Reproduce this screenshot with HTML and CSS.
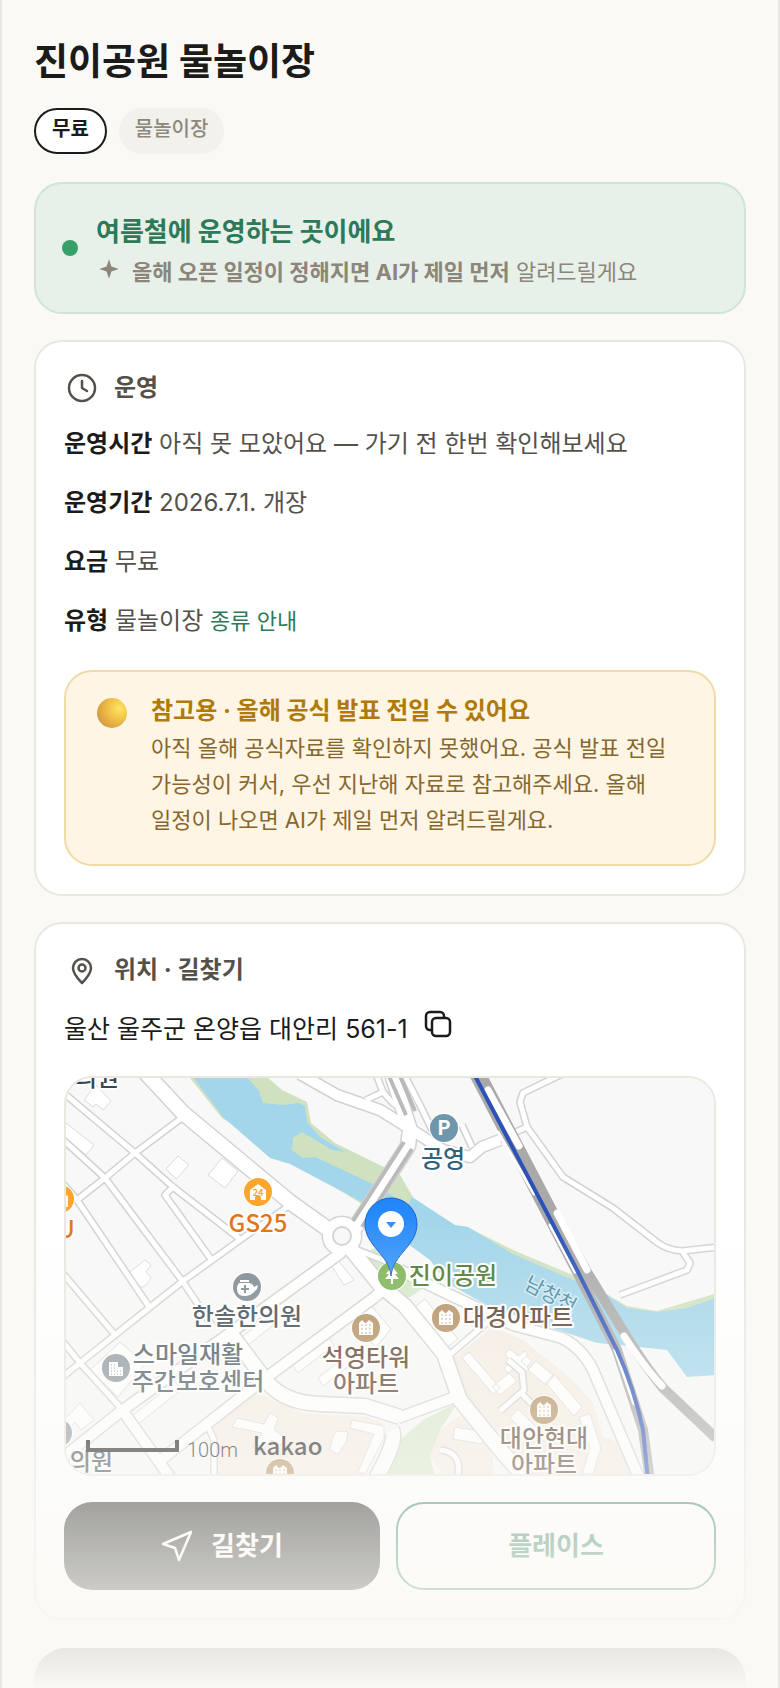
FILE: index.html
```html
<!DOCTYPE html>
<html lang="ko">
<head>
  <meta charset="UTF-8">
  <meta name="viewport" content="width=device-width, initial-scale=1.0">
  <title>진이공원 물놀이장</title>
  <link rel="stylesheet" href="styles.css">
</head>
<body>
<main class="app">
  <h1>진이공원 물놀이장</h1>
  <div class="chips">
    <span class="chip chip-free">무료</span>
    <span class="chip">물놀이장</span>
  </div>

  <section class="status">
    <span class="status-dot"></span>
    <div class="status-body">
      <h2 class="status-title">여름철에 운영하는 곳이에요</h2>
      <p class="status-sub">
        <svg class="sparkle" viewBox="0 0 24 24" aria-hidden="true"><path d="M12 3l2.200 6.800L21 12l-6.800 2.200L12 21l-2.200-6.800L3 12l6.800-2.200z"/></svg>
        <span><b>올해 오픈 일정이 정해지면 AI가 제일 먼저</b> 알려드릴게요</span>
      </p>
    </div>
  </section>

  <section class="card">
    <h2 class="card-title">
      <svg class="icon" viewBox="0 0 36 36" aria-hidden="true"><circle cx="18" cy="18" r="13"/><path d="M18 11v7l5 3"/></svg>
      운영
    </h2>
    <div class="info">
      <p><b>운영시간</b> 아직 못 모았어요 — 가기 전 한번 확인해보세요</p>
      <p><b>운영기간</b> 2026.7.1. 개장</p>
      <p><b>요금</b> 무료</p>
      <p><b>유형</b> 물놀이장 <a href="#types">종류 안내</a></p>
    </div>
    <div class="notice">
      <span class="notice-ball"></span>
      <div>
        <h3>참고용 · 올해 공식 발표 전일 수 있어요</h3>
        <p>아직 올해 공식자료를 확인하지 못했어요. 공식 발표 전일 가능성이 커서, 우선 지난해 자료로 참고해주세요. 올해 일정이 나오면 AI가 제일 먼저 알려드릴게요.</p>
      </div>
    </div>
  </section>

  <section class="card">
    <h2 class="card-title">
      <svg class="icon" viewBox="0 0 36 36" aria-hidden="true"><path d="M18 31c-4-4-9-9-9-15a9 9 0 0 1 18 0c0 6-5 11-9 15z"/><circle cx="18" cy="16" r="3.500"/></svg>
      위치 · 길찾기
    </h2>
    <div class="address">
      <span>울산 울주군 온양읍 대안리 561-1</span>
      <button class="copy" type="button" aria-label="주소 복사">
        <svg viewBox="0 0 28 28" aria-hidden="true"><rect x="8" y="8" width="18" height="18" rx="4"/><path d="M8 20H6a4 4 0 0 1-4-4V6a4 4 0 0 1 4-4h10a4 4 0 0 1 4 4v2"/></svg>
      </button>
    </div>

    <div class="map">
      <svg viewBox="66 1078 648 396" preserveAspectRatio="xMidYMid slice" role="img" aria-label="지도">
        <defs>
          <g id="lanes">
            <path d="M60 1090L135 1153L173 1187L240 1239M183 1117L135 1153L105 1178L77 1200M60 1137L105 1178L183 1282L213 1327M175 1185L165 1195L213 1262M290 1205L240 1240L183 1281L115 1335L80 1363L60 1379M60 1180L77 1200L150 1308M60 1270L115 1335M60 1338L80 1363L120 1407"/>
            <path d="M562 1074L523 1093L520 1102L527 1127L563 1177L613 1208L658 1243Q668 1250 682 1251L718 1247M682 1251L690 1263L687 1270L620 1295M527 1127L475 1150"/>
            <path d="M376 1074L383 1092L366 1100M383 1092Q398 1110 398 1104M405 1076L420 1105L432 1130M462 1125L472 1147M447 1357L490 1320M500 1411L524 1390L522 1372L508 1360M520 1392L536 1408M206 1422L214 1440L214 1476M440 1450Q462 1452 458 1476M345 1245L388 1262"/>
          </g>
          <g id="roads">
            <path d="M300 1074L337 1095L380 1110L412 1130L443 1150L470 1157L482 1147L500 1140"/>
            <path d="M60 1460L120 1412L230 1333L342 1252M157 1463L263 1380L375 1297M120 1407L172 1480M375 1297L387 1286"/>
            <path d="M400 1270L423 1282L513 1325L562 1338Q582 1348 593 1370L640 1480M398 1418L455 1397"/>
          </g>
          <g id="avenues">
            <path d="M143 1070L183 1113L290 1202L332 1232L350 1248L380 1285L405 1306L444 1354L460 1400L503 1453L527 1480"/>
            <path d="M230 1333L267 1382Q285 1403 320 1404L365 1406L400 1417M392 1430Q398 1440 375 1480M355 1228L408 1146L410 1130L392 1074"/>
          </g>
          <g id="apartment">
            <circle r="14"/>
            <path fill="#fff" stroke="none" d="M-7-5l3-3 3 3 1 0 3-3 4 3v12H-7z"/>
            <path stroke="#c2a27c" stroke-width="1" stroke-dasharray="2 2" d="M-5-3H6M-5 1H6M-5 5H6"/>
          </g>
          <linearGradient id="pin" x1="0" y1="0" x2="0" y2="1">
            <stop offset="0" stop-color="#1f86fb"/><stop offset="1" stop-color="#3d97fa"/>
          </linearGradient>
        </defs>

        <rect class="land" x="66" y="1078" width="648" height="396"/>
        <path class="estate" d="M450 1360L493 1327L523 1340L573 1380L593 1403L603 1437L620 1443L632 1480H530L497 1440L460 1390z"/>
        <path class="estate" d="M213 1420L257 1393L303 1413L367 1417L383 1423V1437L363 1480H213z"/>
        <path class="estate" d="M467 1410L493 1443V1480H447L430 1457L440 1430z"/>
        <path class="green pale" d="M458 1402L440 1430L430 1457L436 1480H385L400 1440L423 1420z"/>
        <path class="green pale" d="M360 1255L375 1248L425 1287L410 1297L390 1300z"/>
        <path class="green" d="M190 1078L222 1118L362 1204L385 1209L408 1208L413 1197L400 1175L335 1143L311 1123L307 1102L282 1090L266 1076z"/>
        <path class="green" d="M465 1226L513 1250L575 1276L627 1306L657 1311L714 1294V1302L657 1316L560 1290z"/>
        <path class="water" d="M192 1076L224 1118L270 1158L290 1164L362 1202L373 1184L315 1157L303 1158L292 1150L293 1138L302 1132L332 1150L345 1152L320 1137L307 1122L305 1106L298 1103L283 1105L263 1103L259 1091L246 1076z"/>
        <path class="water" d="M362 1202L373 1184L408 1205L412 1197L455 1225L468 1227L513 1254L573 1280L595 1287L627 1308L657 1312L687 1308L716 1298V1375L687 1377L667 1350L620 1345L597 1343L567 1333L490 1307L447 1283L430 1260L408 1244z"/>

        <g class="buildings">
          <path d="M84 1100l12-15 15 16-8 9-7-6-3 3zM66 1123l28 22-8 10-24-20zM166 1169l12-13 11 9-13 14zM208 1175l14-17 16 13-13 17zM130 1272l15-12 6 5-5 7 5 6-6 8-6 2zM329 1262l7-4 18 22-10 5z"/>
          <path d="M90 1370l30-28 25 22-27 33zM64 1420l16-17 14 17-13 10-6-8-8 8zM127 1420l48-38 6 8-48 38zM238 1340l32-25 6 8-32 25zM292 1365l36-28 6 8-36 28zM318 1378l36-28 5 8-36 28zM347 1318l22-15 22 26-15 18z"/>
          <path d="M415 1307l10-8 33 40-11 8zM462 1358l7-6 31 36-7 6zM492 1387l17-14 8 8-17 14zM515 1361l8-8 9 8-8 9zM528 1370l8-9 18 15-8 9zM546 1383l8-9 28 33-8 9zM510 1418l8-9 28 28-7 8zM579 1417l11-3 11 34-8 26h-11l8-26zM455 1427l29 5-2 12-29-5z"/>
          <path d="M232 1427l5-9 27 6 6-11 8 5-4 12 12 8-5 7-10-5-11 12-7-5 9-14zM332 1440l4-9 12 1-2 10-8 12-8-4zM352 1420l32 6v12l-19 36-7-2 16-38-24-6z"/>
          <path d="M505 1354l5-5 8 7 7-5 3 4-7 6 8 8-5 4-8-7-8 7-4-5 7-6z"/>
        </g>

        <use href="#lanes" class="lane-edge"/>
        <use href="#roads" class="road-edge"/>
        <use href="#avenues" class="avenue-edge"/>
        <circle class="ring-edge" cx="342" cy="1236" r="14"/>
        <use href="#lanes" class="lane"/>
        <use href="#roads" class="road"/>
        <use href="#avenues" class="avenue"/>
        <circle class="ring" cx="342" cy="1236" r="14"/>
        <circle class="island" cx="342" cy="1236" r="9"/>
        <path class="bridge" d="M353 1221L404 1142M362 1227L412 1149M389 1076L406 1115M400 1076L415 1111"/>

        <path class="rail" d="M474 1074L577 1272L617 1350L643 1430L650 1480"/>
        <path class="rail" d="M481 1074L518 1145L553 1212L587 1272L627 1337Q645 1366 663 1388L716 1438"/>
        <path class="rail-gap" d="M488 1090L519 1146M557 1213L587 1270M624 1336Q645 1368 662 1386"/>
        <path class="rail-gap thin" d="M498 1132L534 1194M550 1225L575 1272M615 1350L634 1404"/>
        <path class="rail-line" d="M474 1074L577 1270L617 1350Q634 1388 643 1430L648 1480"/>

        <g class="poi">
          <circle cx="444" cy="1128" r="14" fill="#6f97ab"/>
          <circle cx="258" cy="1192" r="14" fill="#fca62f"/>
          <path fill="#fff" stroke="none" d="M250 1190l8-6 8 6v10h-5v-2a3 3 0 0 0-6 0v2h-5z"/>
          <circle cx="60" cy="1199" r="14" fill="#fca62f"/>
          <path fill="#fff" stroke="none" d="M60 1193l8 3v11h-8z"/>
          <circle cx="247" cy="1287" r="14" fill="#7d8a92"/>
          <path fill="#fff" stroke="none" d="M240 1280h9v2h-9zM239 1283h11q3 1 4 4l4-2-1 4-4 4q-3 3-7 3h-3q-6-1-6-7 0-4 2-6z"/>
          <path stroke="#7d8a92" stroke-width="2" d="M245 1285v8M241 1289h8"/>
          <circle cx="116" cy="1368" r="14" fill="#8c989e"/>
          <path fill="#fff" stroke="none" d="M109 1362h9v5h5v9h-14z"/>
          <path stroke="#8c989e" stroke-width="1" stroke-dasharray="1 2" d="M111 1365h6M111 1368h6M111 1371h11M111 1374h11"/>
          <circle cx="58" cy="1433" r="14" fill="#8c989e"/>
          <circle cx="392" cy="1276" r="14" fill="#7fb457"/>
          <path fill="#fff" stroke="none" d="M392 1266l6 8h-3l4 5h-6v5h-2v-5h-6l4-5h-3z"/>
          <g fill="#b38e60">
            <use href="#apartment" x="366" y="1328"/>
            <use href="#apartment" x="446" y="1318"/>
            <use href="#apartment" x="544" y="1410"/>
            <use href="#apartment" x="280" y="1473"/>
          </g>
        </g>

        <text class="river" transform="translate(523 1288) rotate(28)">남창천</text>
        <g class="labels">
          <text class="parking-mark" x="444" y="1135">P</text>
          <text class="store-mark" x="258" y="1196">24</text>
          <text class="parking" x="443" y="1167">공영</text>
          <text class="store" x="258" y="1232">GS25</text>
          <text class="store" x="66" y="1238">U</text>
          <text class="clinic" x="97" y="1086">의원</text>
          <text class="clinic" x="247" y="1325">한솔한의원</text>
          <text class="care" x="188" y="1363">스마일재활</text>
          <text class="care" x="198" y="1390">주간보호센터</text>
          <text class="clinic" x="91" y="1470">의원</text>
          <text class="park" x="453" y="1284">진이공원</text>
          <text class="home" x="518" y="1326">대경아파트</text>
          <text class="home" x="366" y="1366">석영타워</text>
          <text class="home" x="366" y="1392">아파트</text>
          <text class="home" x="544" y="1447">대안현대</text>
          <text class="home" x="544" y="1473">아파트</text>
        </g>

        <path class="scale" d="M88 1440v10h89v-10"/>
        <text class="scale-text" x="187" y="1457">100m</text>
        <text class="brand" x="253" y="1455">kakao</text>

        <path class="pin" d="M391 1276C389 1254 365 1246 365 1224a26 26 0 0 1 52 0C417 1246 393 1254 391 1276z"/>
        <circle cx="391" cy="1224" r="13" fill="#fff"/>
        <path fill="#2f8ffb" d="M386 1222h10l-5 6z"/>
      </svg>
    </div>

    <div class="actions">
      <button class="btn btn-primary" type="button">
        <svg viewBox="0 0 32 32" aria-hidden="true"><path d="M30 2L2 14l12 4 4 12z"/></svg>
        길찾기
      </button>
      <button class="btn btn-outline" type="button">플레이스</button>
    </div>
  </section>

  <section class="next"></section>
  <div class="fade"></div>
</main>
</body>
</html>
```
FILE: styles.css
```css
* {
  box-sizing: border-box;
}
body {
  margin: 0;
  background: #faf9f5;
  color: #1b1b19;
  font-family: Inter, "Noto Sans CJK KR", sans-serif;
  font-size: 24px;
  line-height: 36px;
  word-break: keep-all;
}
h1, h2, h3, p {
  margin: 0;
}
button {
  font: inherit;
  cursor: pointer;
}
.app {
  position: relative;
  height: 100vh;
  overflow: hidden;
  padding: 34px 32px 0;
  border: solid #e9e7e0;
  border-width: 0 2px;
}
h1 {
  font-size: 37px;
  line-height: 56px;
  font-weight: 700;
}

.chips {
  display: flex;
  gap: 12px;
  margin-top: 18px;
}
.chip {
  padding: 6px 14px 10px;
  border: 2px solid #f2f1ec;
  border-radius: 24px;
  background: #f2f1ec;
  color: #8d887c;
  font-size: 20px;
  line-height: 26px;
  font-weight: 500;
}
.chip-free {
  padding: 6px 16px 10px;
  border-color: #1b1b19;
  background: #fff;
  color: #1b1b19;
  font-weight: 700;
}

.status {
  display: flex;
  align-items: center;
  gap: 18px;
  margin-top: 28px;
  padding: 24px 26px;
  border: 2px solid #cde4d7;
  border-radius: 28px;
  background: #e8f0ea;
}
.status-dot {
  flex: none;
  width: 16px;
  height: 16px;
  border-radius: 50%;
  background: #36a269;
}
.status-body {
  padding-top: 6px;
}
.status-title {
  color: #2c7a58;
  font-size: 26px;
  line-height: 36px;
}
.status-sub {
  display: flex;
  gap: 10px;
  margin-top: 6px;
  color: #8c867a;
  font-size: 22px;
  line-height: 32px;
}
.sparkle {
  flex: none;
  width: 26px;
  height: 26px;
  fill: currentColor;
}

.card {
  margin-top: 26px;
  padding: 28px;
  border: 2px solid #e9e7e0;
  border-radius: 28px;
  background: #fff;
}
.card-title {
  display: flex;
  align-items: center;
  gap: 14px;
  color: #55514a;
  font-size: 24px;
  line-height: 36px;
  font-weight: 700;
}
.icon {
  width: 36px;
  height: 36px;
  fill: none;
  stroke: currentColor;
  stroke-width: 2.5;
  stroke-linecap: round;
  stroke-linejoin: round;
}
.info {
  display: flex;
  flex-direction: column;
  gap: 23px;
  margin: 20px 0 31px;
  color: #55514a;
}
.info b {
  color: #1b1b19;
}
.info a {
  color: #2c7a58;
  font-size: 22px;
  text-decoration: none;
}

.notice {
  display: flex;
  gap: 24px;
  padding: 20px 40px 22px 31px;
  border: 2px solid #efdba6;
  border-radius: 28px;
  background: #fff5e4;
}
.notice-ball {
  flex: none;
  width: 30px;
  height: 30px;
  margin-top: 6px;
  border-radius: 50%;
  background: radial-gradient(circle at 75% 35%, #ffe562, #f0bf48 40%, #d79d40 75%, #d4866a);
}
.notice h3 {
  color: #b07a0a;
  font-size: 24px;
  line-height: 38px;
}
.notice p {
  padding-bottom: 4px;
  color: #86672e;
  font-size: 22px;
  line-height: 36px;
}

.address {
  display: flex;
  align-items: center;
  gap: 16px;
  margin: 20px 0 26px;
  font-size: 25px;
  line-height: 42px;
}
.copy {
  width: 28px;
  height: 28px;
  margin-bottom: 10px;
  padding: 0;
  border: 0;
  background: none;
  color: #1b1b19;
}
.copy svg {
  display: block;
  fill: none;
  stroke: currentColor;
  stroke-width: 2.5;
}

/* map */
.map {
  overflow: hidden;
  border: 2px solid #e9e7e0;
  border-radius: 28px;
}
.map svg {
  display: block;
  width: 100%;
  fill: none;
}
.map .land { fill: #f8f8f8; }
.map .estate { fill: #f4ede3; }
.map .green { fill: #d0e1c0; }
.map .pale { fill: #d7e8cb; }
.map .water { fill: #a3d6ea; }
.buildings { fill: #fff; stroke: #dadada; }
.lane-edge, .road-edge, .avenue-edge, .ring-edge { stroke: #d2d2d2; stroke-linejoin: round; }
.lane, .road, .avenue, .ring { stroke: #fff; stroke-linejoin: round; }
.lane-edge { stroke-width: 8; }
.lane { stroke-width: 5; }
.road-edge { stroke-width: 13; }
.road { stroke-width: 10; }
.avenue-edge { stroke-width: 17; }
.avenue { stroke-width: 14; }
.ring-edge { stroke-width: 13; }
.ring { stroke-width: 10; }
.island { fill: #f8f8f8; stroke: #d2d2d2; stroke-width: 2; }
.bridge { stroke: #bababa; stroke-width: 4; }
.rail { stroke: #a9a9a9; stroke-width: 10; }
.rail-gap { stroke: #fff; stroke-width: 7; stroke-linecap: round; }
.rail-gap.thin { stroke-width: 3; }
.rail-line { stroke: #2c52b8; stroke-width: 4; }
.poi { stroke: #fff; stroke-width: 2; paint-order: stroke; }
.labels {
  font-family: "Noto Sans CJK KR", sans-serif;
  font-size: 24px;
  font-weight: 500;
  text-anchor: middle;
  stroke: #fff;
  stroke-width: 4;
  stroke-linejoin: round;
  paint-order: stroke;
}
.labels .parking-mark {
  fill: #fff;
  stroke: none;
  font-size: 20px;
  font-weight: 700;
}
.labels .store-mark {
  fill: #fca62f;
  stroke: none;
  font-size: 9px;
  font-weight: 700;
}
.parking { fill: #31627c; }
.store { fill: #e07414; }
.clinic { fill: #38464f; }
.care { fill: #47565f; }
.park { fill: #4c7a32; }
.home { fill: #573c2c; }
.river {
  fill: #3f88a4;
  stroke: #cfe9f3;
  stroke-width: 3;
  paint-order: stroke;
  font-family: "Noto Sans CJK KR", sans-serif;
  font-size: 20px;
}
.scale { stroke: #111; stroke-width: 4; }
.scale-text {
  fill: #111;
  font-family: Roboto, sans-serif;
  font-size: 20px;
  font-weight: 300;
}
.brand {
  fill: #111;
  font-family: "Noto Sans CJK KR", sans-serif;
  font-size: 24px;
  font-weight: 500;
}
.map .pin { fill: url(#pin); stroke: #1c63c4; }

.actions {
  display: flex;
  gap: 16px;
  margin-top: 26px;
}
.btn {
  display: flex;
  flex: 1;
  align-items: center;
  justify-content: center;
  gap: 18px;
  height: 88px;
  padding: 0;
  border-radius: 28px;
  font-size: 26px;
  font-weight: 700;
}
.btn-primary {
  border: 0;
  background: #1b1b19;
  color: #fff;
}
.btn-primary svg {
  width: 32px;
  height: 32px;
  fill: none;
  stroke: currentColor;
  stroke-width: 2.5;
  stroke-linejoin: round;
}
.btn-outline {
  border: 2px solid #2c7a58;
  background: #fff;
  color: #2c7a58;
}

.next {
  height: 120px;
  margin-top: 28px;
  border-radius: 32px;
  background: #1b1b19;
}
/* the page fades out towards the bottom edge */
.fade {
  position: absolute;
  right: -2px;
  bottom: 0;
  left: -2px;
  height: 28vh;
  background: linear-gradient(rgba(250, 249, 245, 0), #faf9f5);
  pointer-events: none;
}
```
